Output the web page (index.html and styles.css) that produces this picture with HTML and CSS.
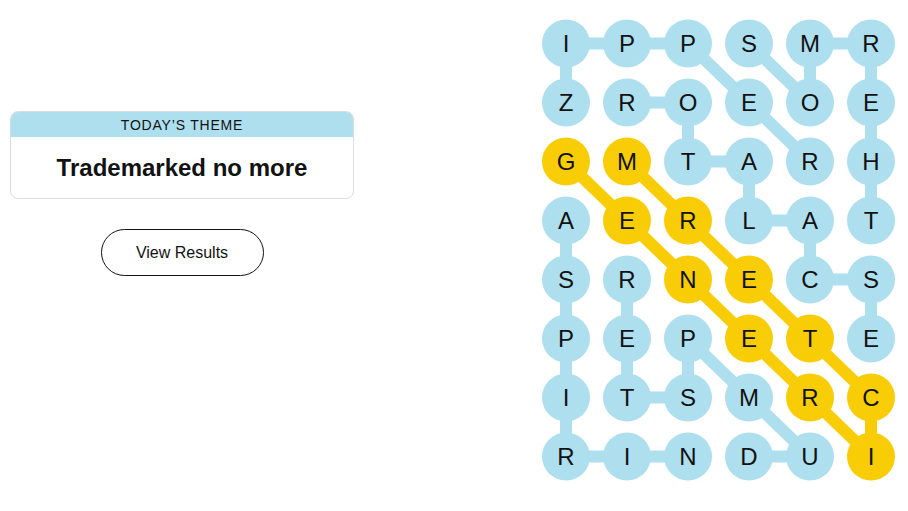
FILE: index.html
```html
<!DOCTYPE html>
<html>
<head>
<meta charset="utf-8">
<link rel="stylesheet" href="styles.css">
</head>
<body>
<div class="page">
  <div class="side">
    <div class="theme-card">
      <div class="theme-head">TODAY’S THEME</div>
      <div class="theme-body">Trademarked no more</div>
    </div>
    <button class="results-btn">View Results</button>
  </div>
  <svg class="board" width="366" height="511" viewBox="0 0 366 511">
    <g class="links-blue">
      <line x1="24" y1="43.5" x2="85" y2="43.5"/>
      <line x1="85" y1="43.5" x2="146" y2="43.5"/>
      <line x1="24" y1="43.5" x2="24" y2="102.5"/>
      <line x1="146" y1="43.5" x2="207" y2="102.5"/>
      <line x1="207" y1="43.5" x2="268" y2="102.5"/>
      <line x1="268" y1="43.5" x2="329" y2="43.5"/>
      <line x1="268" y1="43.5" x2="268" y2="102.5"/>
      <line x1="329" y1="43.5" x2="329" y2="102.5"/>
      <line x1="329" y1="102.5" x2="329" y2="161.5"/>
      <line x1="207" y1="102.5" x2="268" y2="161.5"/>
      <line x1="85" y1="102.5" x2="146" y2="102.5"/>
      <line x1="146" y1="102.5" x2="146" y2="161.5"/>
      <line x1="146" y1="161.5" x2="207" y2="161.5"/>
      <line x1="207" y1="161.5" x2="207" y2="220.5"/>
      <line x1="207" y1="220.5" x2="268" y2="220.5"/>
      <line x1="329" y1="161.5" x2="329" y2="220.5"/>
      <line x1="268" y1="220.5" x2="268" y2="279.5"/>
      <line x1="268" y1="279.5" x2="329" y2="279.5"/>
      <line x1="329" y1="279.5" x2="329" y2="338.5"/>
      <line x1="24" y1="220.5" x2="24" y2="279.5"/>
      <line x1="24" y1="279.5" x2="24" y2="338.5"/>
      <line x1="24" y1="338.5" x2="24" y2="397.5"/>
      <line x1="24" y1="397.5" x2="24" y2="456.5"/>
      <line x1="24" y1="456.5" x2="85" y2="456.5"/>
      <line x1="85" y1="456.5" x2="146" y2="456.5"/>
      <line x1="85" y1="279.5" x2="85" y2="338.5"/>
      <line x1="85" y1="338.5" x2="85" y2="397.5"/>
      <line x1="85" y1="397.5" x2="146" y2="397.5"/>
      <line x1="146" y1="338.5" x2="146" y2="397.5"/>
      <line x1="146" y1="338.5" x2="207" y2="397.5"/>
      <line x1="207" y1="397.5" x2="268" y2="456.5"/>
      <line x1="207" y1="456.5" x2="268" y2="456.5"/>
    </g>
    <g class="links-gold">
      <line x1="24" y1="161.5" x2="85" y2="220.5"/>
      <line x1="85" y1="220.5" x2="146" y2="279.5"/>
      <line x1="146" y1="279.5" x2="207" y2="338.5"/>
      <line x1="207" y1="338.5" x2="268" y2="397.5"/>
      <line x1="268" y1="397.5" x2="329" y2="456.5"/>
      <line x1="329" y1="397.5" x2="329" y2="456.5"/>
      <line x1="85" y1="161.5" x2="146" y2="220.5"/>
      <line x1="146" y1="220.5" x2="207" y2="279.5"/>
      <line x1="207" y1="279.5" x2="268" y2="338.5"/>
      <line x1="268" y1="338.5" x2="329" y2="397.5"/>
    </g>
    <g class="dots">
      <circle class="blue" cx="24" cy="43.5" r="24"/><circle class="blue" cx="85" cy="43.5" r="24"/><circle class="blue" cx="146" cy="43.5" r="24"/><circle class="blue" cx="207" cy="43.5" r="24"/><circle class="blue" cx="268" cy="43.5" r="24"/><circle class="blue" cx="329" cy="43.5" r="24"/>
      <circle class="blue" cx="24" cy="102.5" r="24"/><circle class="blue" cx="85" cy="102.5" r="24"/><circle class="blue" cx="146" cy="102.5" r="24"/><circle class="blue" cx="207" cy="102.5" r="24"/><circle class="blue" cx="268" cy="102.5" r="24"/><circle class="blue" cx="329" cy="102.5" r="24"/>
      <circle class="gold" cx="24" cy="161.5" r="24"/><circle class="gold" cx="85" cy="161.5" r="24"/><circle class="blue" cx="146" cy="161.5" r="24"/><circle class="blue" cx="207" cy="161.5" r="24"/><circle class="blue" cx="268" cy="161.5" r="24"/><circle class="blue" cx="329" cy="161.5" r="24"/>
      <circle class="blue" cx="24" cy="220.5" r="24"/><circle class="gold" cx="85" cy="220.5" r="24"/><circle class="gold" cx="146" cy="220.5" r="24"/><circle class="blue" cx="207" cy="220.5" r="24"/><circle class="blue" cx="268" cy="220.5" r="24"/><circle class="blue" cx="329" cy="220.5" r="24"/>
      <circle class="blue" cx="24" cy="279.5" r="24"/><circle class="blue" cx="85" cy="279.5" r="24"/><circle class="gold" cx="146" cy="279.5" r="24"/><circle class="gold" cx="207" cy="279.5" r="24"/><circle class="blue" cx="268" cy="279.5" r="24"/><circle class="blue" cx="329" cy="279.5" r="24"/>
      <circle class="blue" cx="24" cy="338.5" r="24"/><circle class="blue" cx="85" cy="338.5" r="24"/><circle class="blue" cx="146" cy="338.5" r="24"/><circle class="gold" cx="207" cy="338.5" r="24"/><circle class="gold" cx="268" cy="338.5" r="24"/><circle class="blue" cx="329" cy="338.5" r="24"/>
      <circle class="blue" cx="24" cy="397.5" r="24"/><circle class="blue" cx="85" cy="397.5" r="24"/><circle class="blue" cx="146" cy="397.5" r="24"/><circle class="blue" cx="207" cy="397.5" r="24"/><circle class="gold" cx="268" cy="397.5" r="24"/><circle class="gold" cx="329" cy="397.5" r="24"/>
      <circle class="blue" cx="24" cy="456.5" r="24"/><circle class="blue" cx="85" cy="456.5" r="24"/><circle class="blue" cx="146" cy="456.5" r="24"/><circle class="blue" cx="207" cy="456.5" r="24"/><circle class="blue" cx="268" cy="456.5" r="24"/><circle class="gold" cx="329" cy="456.5" r="24"/>
    </g>
    <g class="letters">
      <text x="24" y="52.1">I</text><text x="85" y="52.1">P</text><text x="146" y="52.1">P</text><text x="207" y="52.1">S</text><text x="268" y="52.1">M</text><text x="329" y="52.1">R</text>
      <text x="24" y="111.1">Z</text><text x="85" y="111.1">R</text><text x="146" y="111.1">O</text><text x="207" y="111.1">E</text><text x="268" y="111.1">O</text><text x="329" y="111.1">E</text>
      <text x="24" y="170.1">G</text><text x="85" y="170.1">M</text><text x="146" y="170.1">T</text><text x="207" y="170.1">A</text><text x="268" y="170.1">R</text><text x="329" y="170.1">H</text>
      <text x="24" y="229.1">A</text><text x="85" y="229.1">E</text><text x="146" y="229.1">R</text><text x="207" y="229.1">L</text><text x="268" y="229.1">A</text><text x="329" y="229.1">T</text>
      <text x="24" y="288.1">S</text><text x="85" y="288.1">R</text><text x="146" y="288.1">N</text><text x="207" y="288.1">E</text><text x="268" y="288.1">C</text><text x="329" y="288.1">S</text>
      <text x="24" y="347.1">P</text><text x="85" y="347.1">E</text><text x="146" y="347.1">P</text><text x="207" y="347.1">E</text><text x="268" y="347.1">T</text><text x="329" y="347.1">E</text>
      <text x="24" y="406.1">I</text><text x="85" y="406.1">T</text><text x="146" y="406.1">S</text><text x="207" y="406.1">M</text><text x="268" y="406.1">R</text><text x="329" y="406.1">C</text>
      <text x="24" y="465.1">R</text><text x="85" y="465.1">I</text><text x="146" y="465.1">N</text><text x="207" y="465.1">D</text><text x="268" y="465.1">U</text><text x="329" y="465.1">I</text>
    </g>
  </svg>
</div>
</body>
</html>
```
FILE: styles.css
```css
html, body {
  margin: 0;
  padding: 0;
  background: #ffffff;
}

body {
  font-family: "Liberation Sans", Arial, sans-serif;
  color: #121212;
}

.page {
  display: flex;
  width: 908px;
  height: 511px;
  overflow: hidden;
}

.side {
  width: 344px;
  padding: 111px 10px 0 10px;
  display: flex;
  flex-direction: column;
  align-items: center;
}

.theme-card {
  width: 344px;
  box-sizing: border-box;
  border: 1px solid #dcdcdc;
  border-radius: 8px;
  overflow: hidden;
}

.theme-head {
  background: #aedfee;
  height: 25px;
  line-height: 26px;
  text-align: center;
  font-size: 14px;
  letter-spacing: 0.8px;
  color: #121212;
}

.theme-body {
  height: 61px;
  display: flex;
  align-items: center;
  justify-content: center;
  font-size: 24px;
  font-weight: bold;
  color: #121212;
  padding-top: 1px;
  box-sizing: border-box;
}

.results-btn {
  margin-top: 30px;
  width: 163px;
  height: 47px;
  border: 1px solid #121212;
  border-radius: 24px;
  background: #ffffff;
  font-family: "Liberation Sans", Arial, sans-serif;
  font-size: 16px;
  color: #121212;
  padding: 0;
}

.board {
  margin-left: 178px;
  display: block;
}

.links-blue line {
  stroke: #aedfee;
  stroke-width: 12;
}

.links-gold line {
  stroke: #f9cd05;
  stroke-width: 12;
}

.dots .blue {
  fill: #aedfee;
}

.dots .gold {
  fill: #f9cd05;
}

.letters text {
  font-family: "Liberation Sans", Arial, sans-serif;
  font-size: 24px;
  text-anchor: middle;
  fill: #121212;
}
```
